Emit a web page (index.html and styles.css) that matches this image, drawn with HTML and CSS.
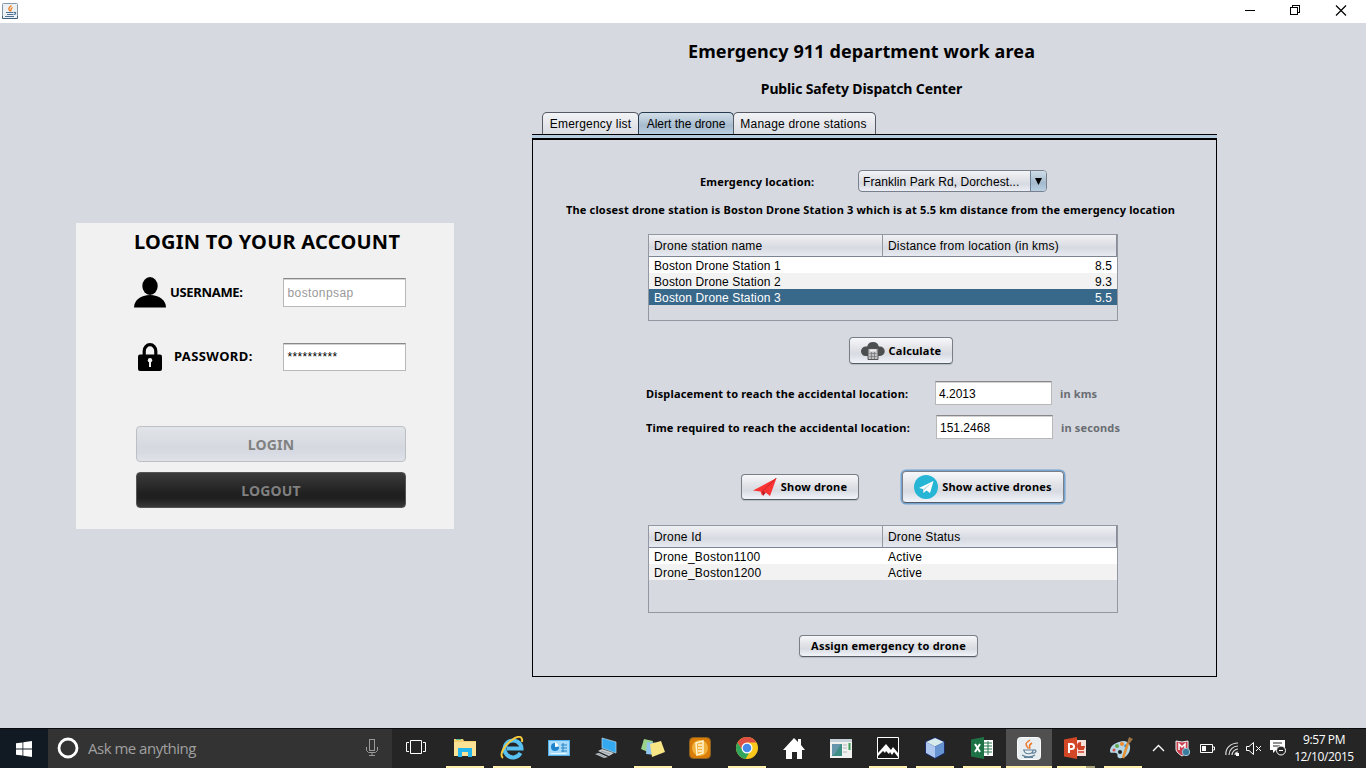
FILE: index.html
```html
<!DOCTYPE html>
<html lang="en">
<head>
<meta charset="utf-8">
<title>Emergency 911 department work area</title>
<link rel="stylesheet" href="styles.css">
</head>
<body>
<header class="titlebar">
  <svg class="java-mini" width="16" height="16" viewBox="0 0 16 16"><rect x=".5" y=".5" width="15" height="15" rx="1" fill="#edf1f4" stroke="#8297a8"/><path d="M.5 13v2.500h15V13" fill="none" stroke="#3f6078"/><path d="M9.500 2.500C6.500 5 6 6 8 8M10.500 4.500C8 6 9.500 7 8.500 8.500" fill="none" stroke="#ee7d1c" stroke-width="1.300"/><path d="M4 9.500h7.500M5 11.500h6M3 13.500h9M12 9.500c2.500-.5 2 2-.5 2" fill="none" stroke="#4d7599" stroke-width="1.200"/></svg>
  <svg class="window-controls" width="112" height="22" viewBox="0 0 112 22" fill="none" stroke="#000" shape-rendering="crispEdges"><path d="M4 10.500h10"/><path d="M49.500 7.500h7v7h-7zM51.500 7V5.500h7v7H57"/><path d="M95 5.500l10 10M105 5.500l-10 10" shape-rendering="auto" stroke-width="1.200"/></svg>
</header>
<main class="workspace">
  <section class="login">
    <h2 class="login-title">LOGIN TO YOUR ACCOUNT</h2>
    <div class="login-row username-row">
      <svg width="32" height="31" viewBox="0 0 32 31"><ellipse cx="16" cy="9" rx="7.700" ry="9"/><path d="M0 30.500C0 23 7 18 16 18s16 5 16 12.500z"/></svg>
      <label class="username-label">USERNAME:</label>
      <div class="field login-field disabled"><span>bostonpsap</span></div>
    </div>
    <div class="login-row password-row">
      <svg width="24" height="28" viewBox="0 0 24 28"><path d="M6.200 13V8a5.800 6.300 0 0 1 11.600 0v5" fill="none" stroke="#000" stroke-width="3.200"/><rect y="11.500" width="24" height="16.500" rx="2"/><circle cx="12" cy="17.300" r="2.200" fill="#f1f1f1"/><path d="M11 18h2v6h-2z" fill="#f1f1f1"/></svg>
      <label class="password-label">PASSWORD:</label>
      <div class="field login-field password-field"><span class="stars">**********</span></div>
    </div>
    <button class="wide-button login-button"><span>LOGIN</span></button>
    <button class="wide-button logout-button"><span>LOGOUT</span></button>
  </section>
  <section class="dispatch">
    <h1 class="heading"><span>Emergency 911 department work area</span></h1>
    <h3 class="subheading"><span>Public Safety Dispatch Center</span></h3>
    <nav class="tabs">
      <div class="tab tab-list">Emergency list</div>
      <div class="tab tab-alert">Alert the drone</div>
      <div class="tab tab-manage">Manage drone stations</div>
    </nav>
    <div class="tab-strip"></div>
    <div class="panel">
      <div class="location-row">
        <label class="location-label">Emergency location:</label>
        <div class="combo"><span class="combo-text">Franklin Park Rd, Dorchest...</span><span class="combo-arrow"><svg width="7" height="7" viewBox="0 0 8 8"><path d="M0 0h8L4 8z"/></svg></span></div>
      </div>
      <p class="message"><span>The closest drone station is Boston Drone Station 3 which is at 5.5 km distance from the emergency location</span></p>
      <div class="table stations">
        <div class="thead"><span>Drone station name</span><span>Distance from location (in kms)</span></div>
        <div class="trow"><span>Boston Drone Station 1</span><span class="num">8.5</span></div>
        <div class="trow alt"><span>Boston Drone Station 2</span><span class="num">9.3</span></div>
        <div class="trow selected"><span>Boston Drone Station 3</span><span class="num">5.5</span></div>
      </div>
      <button class="btn calculate"><svg width="24" height="20" viewBox="0 0 24 20"><path d="M4.500 15A4.600 4.600 0 0 1 5 5.500h1.200a6 6 0 0 1 11.600 0H19a4.700 4.700 0 0 1 0 9.500z" fill="#4b4f50"/><path d="M7 7.500h10v11H7z" fill="#bfc1c3" stroke="#555"/><path d="M9 9.500h6" stroke="#eee" stroke-width="2"/><path d="M8.500 12.500h7M8.500 15.500h7M10.500 11v7M13.500 11v7" stroke="#77797b" stroke-width=".8"/></svg><span>Calculate</span></button>
      <div class="result-row displacement-row"><label>Displacement to reach the accidental location:</label><div class="field result-field">4.2013</div><span class="unit kms">in kms</span></div>
      <div class="result-row time-row"><label>Time required to reach the accidental location:</label><div class="field result-field">151.2468</div><span class="unit secs">in seconds</span></div>
      <div class="drone-buttons">
        <button class="btn show-drone"><svg width="24" height="19" viewBox="0 0 24 19"><path d="M0 12.500L23.500 0 17 18l-5-4-3 3.500-1.500-4z" fill="#fa3434"/><path d="M9 13l1 5 3-3.500z" fill="#bd1d24"/><path d="M23.500 0L9 13.500" stroke="#c9252b"/></svg><span>Show drone</span></button>
        <button class="btn show-active"><svg width="24" height="24" viewBox="0 0 24 24"><circle cx="12" cy="12" r="12" fill="#27b5d5"/><path d="M5 13L19.500 6 16 18l-3.500-2.500L9.500 18l-.5-4z" fill="#fff"/><path d="M18 7.500L9 14l.5 4 1.300-3z" fill="#c7dce4"/></svg><span>Show active drones</span></button>
      </div>
      <div class="table drones">
        <div class="thead"><span>Drone Id</span><span>Drone Status</span></div>
        <div class="trow"><span>Drone_Boston1100</span><span>Active</span></div>
        <div class="trow alt"><span>Drone_Boston1200</span><span>Active</span></div>
      </div>
      <button class="btn assign"><span>Assign emergency to drone</span></button>
    </div>
  </section>
</main>
<footer class="taskbar">
  <div class="start"><svg width="16" height="16" viewBox="0 0 16 16" fill="#fff"><path d="M0 2.300l6.500-.9v6.200H0zM7.300 1.300L16 0v7.600H7.300zM0 8.400h6.500v6.200L0 13.700zM7.300 8.400H16V16l-8.700-1.300z"/></svg></div>
  <div class="search">
    <svg width="22" height="22" viewBox="0 0 22 22"><circle cx="11" cy="11" r="9" fill="none" stroke="#fff" stroke-width="2.800"/></svg>
    <span class="ask">Ask me anything</span>
    <svg class="mic" width="12" height="17" viewBox="0 0 12 17" fill="none" stroke="#999"><rect x="3.500" y=".5" width="5" height="11"/><path d="M.5 8v3.500l2 2h7l2-2V8M6 13.500v3M3 16.500h6"/></svg>
  </div>
  <div class="taskview"><svg width="20" height="15" viewBox="0 0 20 15" fill="none" stroke="#fff"><path d="M4.500.5h11v13h-11zM3 2.500H.5v9H3M17 2.500h2.500v9H17"/></svg></div>
  <div class="apps">
    <div class="app open"><svg width="22" height="20" viewBox="0 0 22 20"><path d="M0 1h9l1 2h12v15H0z" fill="#f2cf70"/><path d="M0 4h22v14H0z" fill="#fbe294"/><path d="M2 1h5v1H2z" fill="#55b98c"/><path d="M4 10h14v9h-4v-5H8v5H4z" fill="#25b6ed"/></svg></div>
    <div class="app open"><svg width="24" height="24" viewBox="0 0 24 24"><path d="M20.500 17a8.500 8.500 0 1 1 1-4.500H7" fill="none" stroke="#58c1f1" stroke-width="4"/><path d="M3 22C-1 19 4 9 12 4 17 0 23-1 22 6" fill="none" stroke="#f5ca3c" stroke-width="2"/></svg></div>
    <div class="app"><svg width="22" height="17" viewBox="0 0 22 17"><rect x=".5" y=".5" width="21" height="15" fill="#a6dafb" stroke="#50aeea"/><circle cx="7" cy="7" r="4" fill="#1c83cc"/><path d="M7 7V2.500a4.500 4.500 0 0 1 4 4z" fill="#fff"/><path d="M13 5h6M13 8h6M13 11h6M15 3v9" stroke="#2b84c2"/><path d="M3 13.500h15" stroke="#e7f7ff"/></svg></div>
    <div class="app"><svg width="24" height="22" viewBox="0 0 24 22"><path d="M8 1l14 4v11L8 11z" fill="#35a9ef" stroke="#b9d6e6" stroke-width=".7"/><path d="M4 14l4-2 12 4-5 3zM1 17l4-1 9 4-4 1z" fill="#c4ccd0"/><path d="M7 14l9 3M4 17l7 3" stroke="#8b969d" stroke-width=".8"/></svg></div>
    <div class="app open"><svg width="24" height="20" viewBox="0 0 24 20"><path d="M3 1l9 2-3 12-9-4z" fill="#9bd38a"/><path d="M6 4l10 1-1 12-10-1z" fill="#8fc5ef"/><path d="M9 6l11-3 4 11-13 5z" fill="#f8e684"/></svg></div>
    <div class="app"><svg width="22" height="22" viewBox="0 0 22 22"><rect x=".5" y=".5" width="21" height="21" rx="4" fill="#d87d08" stroke="#8b5f20"/><circle cx="11" cy="11" r="8" fill="#f2b13a"/><path d="M7 6l7-2v12l-6 2zM9 8h4M9 11h4M9 14h4" fill="none" stroke="#fff5d5" stroke-width="1.500"/></svg></div>
    <div class="app open"><svg width="22" height="22" viewBox="0 0 22 22"><circle cx="11" cy="11" r="11" fill="#fbc91c"/><path d="M1.500 5.500A11 11 0 0 1 20.500 5.500H11L6.700 13.500z" fill="#df4f43"/><path d="M1.500 5.500a11 11 0 0 0 8 16.400l5-8.400H6.700z" fill="#30a55b"/><circle cx="11" cy="11" r="5.500" fill="#fff"/><circle cx="11" cy="11" r="4.300" fill="#4589e9"/></svg></div>
    <div class="app"><svg width="22" height="21" viewBox="0 0 22 21"><path d="M11 0l4 4V1h3v6l4 5h-3v9h-5v-7H9v7H3v-9H0z" fill="#fff"/></svg></div>
    <div class="app"><svg width="22" height="19" viewBox="0 0 22 19"><path d="M0 0h22v19H0z" fill="#f1f2ef"/><path d="M0 0h22v3H0z" fill="#c6d0d7"/><path d="M2 5h10v12H2z" fill="#3d8f86"/><path d="M2 5h9L4 16H2z" fill="#6596ac"/><path d="M13 6h4M13 9h4M13 13h4" stroke="#b0b5bb"/><path d="M19.500 4v7" stroke="#3b9b57" stroke-width="2"/></svg></div>
    <div class="app open"><svg width="22" height="22" viewBox="0 0 22 22"><path d="M.5.5h21v21H.5z" fill="#191919" stroke="#fff"/><path d="M1 16l8-9 5 6 2-3 5 6v4l-4-5-2 3-2-3-1 2-3-3-1 2-2-2-5 5z" fill="#fff"/></svg></div>
    <div class="app open"><svg width="22" height="22" viewBox="0 0 22 22"><path d="M11 0l10 4.500v12L11 22 1 16.500v-12z" fill="#1b2c68"/><path d="M11 1l9 4-9 4.500L2 5z" fill="#d7ebed"/><path d="M2 5l9 4.500V21l-9-5z" fill="#adc7ee"/><path d="M20 5l-9 4.500V21l9-5z" fill="#6693d2"/></svg></div>
    <div class="app open"><svg width="22" height="22" viewBox="0 0 22 22"><path d="M12 3h10v16H12z" fill="#fff"/><path d="M13 6h8M13 9h8M13 12h8M13 15h8M17 4v14" stroke="#24774a"/><path d="M0 2.500L13 0v22L0 19.500z" fill="#1d7345"/><path d="M4 7l5 8M9 7l-5 8" stroke="#fff" stroke-width="2"/></svg></div>
    <div class="app open active"><svg width="24" height="23" viewBox="0 0 24 23"><rect x=".5" y=".5" width="23" height="22" rx="3" fill="#e8edf0" stroke="#f8fafb"/><path d="M13 3C7 7 9 8 11.500 11.500M15 6c-5 3-1 3-2.500 6" fill="none" stroke="#ed792c" stroke-width="1.500"/><path d="M6 13h10c0 5-9 5-9 0M16 13c5-1 3 4-1 3M5 18c4 3 10 2 13 0M7 20.500h9" fill="none" stroke="#5e8099" stroke-width="1.200"/></svg></div>
    <div class="app open powerpoint"><svg width="22" height="22" viewBox="0 0 22 22"><path d="M12 3h10v16H12z" fill="#f8ded8"/><path d="M14 12h6M14 15h6" stroke="#cf4226" stroke-width="1.500"/><path d="M17 5v4h4a4 4 0 1 1-4-4" fill="#cf4226"/><path d="M0 2.500L13 0v22L0 19.500z" fill="#d24726"/><path d="M5 16V7h2.500a2.500 2.500 0 0 1 0 5H5" fill="none" stroke="#fff" stroke-width="2"/></svg></div>
    <div class="app open"><svg width="24" height="23" viewBox="0 0 24 23"><path d="M10 5c8-3 12 2 11 7-1 7-7 10-11 9-3-1 0-4-3-5-3-1-6 1-6-2 0-5 5-8 9-9z" fill="#b4d7e8"/><circle cx="8" cy="9" r="2" fill="#66a94d"/><circle cx="13" cy="7" r="2" fill="#ef8b2c"/><circle cx="5" cy="13" r="1.500" fill="#d94d44"/><circle cx="17" cy="9" r="1.800" fill="#3686c8"/><circle cx="11" cy="15" r="2" fill="#222"/><path d="M14 21l5-15" stroke="#e39233" stroke-width="2.500"/><path d="M18 6l2-6 4 2-4 5z" fill="#9c7445"/></svg></div>
  </div>
  <div class="tray">
    <svg width="112" height="18" viewBox="0 0 112 18" fill="none"><path d="M1 12l5.500-5.500L12 12" stroke="#fff" stroke-width="1.300"/><path d="M24 2l6 1 6-1v8c0 3-4 6-6 7-3-2-6-4-6-7z" fill="#c94051" stroke="#f4f4f4"/><path d="M27 11V5l3 3 3-3v5" stroke="#fff" stroke-width="1.500"/><circle cx="34" cy="13" r="3.700" fill="#397c9d" stroke="#9ec7d6"/><path d="M48.500 5.500h12v8h-12zM61 8h1.500v3H61" stroke="#fff"/><path d="M50 7h4v5h-4z" fill="#fff"/><path d="M74 16C73 9 79 4 86 4M77 16c0-5 4-9 9-9M80 16c0-3 3-6 6-6M83 16c0-2 1-3 3-3" stroke="#ddd" stroke-width="1.200"/><path d="M84 14h3v3h-3z" fill="#fff"/><path d="M94.500 7.500H97L101.500 3.500v12L97 11.500h-2.500z" stroke="#fff"/><path d="M104 7l5 5M109 7l-5 5" stroke="#fff"/></svg>
    <svg class="notifications" width="17" height="17" viewBox="0 0 17 17"><path d="M0 1h15v10H6l-3 3v-3H0z" fill="#fff"/><path d="M3 4h9M3 7h7" stroke="#252525"/><circle cx="11" cy="11.500" r="4.500" fill="#252525" stroke="#fff"/><path d="M9 11.500h4" stroke="#fff"/></svg>
    <div class="clock"><span>9:57 PM</span><span>12/10/2015</span></div>
  </div>
</footer>
</body>
</html>
```
FILE: styles.css
```css
* { box-sizing: border-box; }
body { margin: 0; width: 1366px; height: 768px; overflow: hidden; background: #d6d9e0; color: #000; font: 12px/16px "Liberation Sans", Arial, sans-serif; display: flex; flex-direction: column; }
h1, h2, h3, p { margin: 0; }
svg { display: block; flex: none; }
span, label { white-space: nowrap; }
label, .message, .btn, .unit, .heading, .subheading, .login-title, .wide-button { font-family: "Noto Sans", sans-serif; font-weight: 700; }
.titlebar { height: 23px; background: #fff; display: flex; justify-content: space-between; padding: 3px 13px 0 2px; }
.window-controls { width: 112px; margin-top: -3px; }
.workspace { height: 705px; display: flex; align-items: flex-start; }
.login { margin: 200px 78px 0 76px; width: 378px; height: 306px; background: #f1f1f1; padding: 6px 48px 0 58px; display: flex; flex-direction: column; }
.login-title { font-size: 20px; line-height: 26px; height: 26px; white-space: nowrap; letter-spacing: .25px; }
.login-row { display: flex; align-items: center; height: 31px; }
.username-row { margin-top: 22px; }
.password-row { margin-top: 33px; padding-left: 4px; }
.login-row label { font-size: 13px; line-height: 18px; padding-bottom: 1px; }
.username-label { width: 113px; margin-left: 4px; letter-spacing: -.33px; }
.password-label { width: 109px; margin-left: 12px; letter-spacing: .4px; }
.field { background: #fff; border: 1px solid #b8b8b8; border-top: 1px solid #888; box-shadow: inset 0 1px #d2d2d2; display: flex; align-items: center; padding: 0 3px; }
.login-field { width: 124px; height: 29px; padding-left: 4px; }
.password-field { height: 28px; margin-top: 1px; }
.disabled { color: #999; letter-spacing: .4px; }
.stars { letter-spacing: .33px; }
.wide-button { width: 270px; height: 36px; border-radius: 4px; font-size: 14px; margin-left: 2px; color: #808080; border: 1px solid #bcc0c5; padding: 0; letter-spacing: .15px; }
.login-button { margin-top: 54px; background: linear-gradient(#e1e5e9, #d5d9df 60%, #d7dae3 75%, #dfe3e7); }
.logout-button { margin-top: 10px; background: linear-gradient(#3b3b3b, #202020 60%, #202020 75%, #393939); border-color: #555; }
.dispatch { width: 685px; padding-top: 15px; }
.heading { height: 26px; text-align: center; font-size: 18px; line-height: 26px; width: 659px; letter-spacing: .12px; }
.subheading { height: 20px; width: 659px; margin-top: 15px; text-align: center; font-size: 14px; line-height: 20px; letter-spacing: -.14px; }
.tabs { display: flex; height: 22px; margin: 13px 0 0 10px; }
.tab { border: 1px solid #555a65; border-bottom: 0; border-radius: 5px 5px 0 0; background: linear-gradient(#f2f3f5, #d9dce2); text-align: center; line-height: 22px; white-space: nowrap; }
.tab-list { width: 97px; letter-spacing: .2px; }
.tab-alert { width: 96px; margin-left: -1px; background: linear-gradient(#d3dfe8, #a7bbcf 60%, #b9cee0); border-color: #263a50; }
.tab-manage { width: 143px; margin-left: -1px; padding-right: 2px; letter-spacing: .2px; }
.tab-strip { height: 4px; border-top: 1px solid #000; background: #b4cde0; }
.panel { width: 685px; height: 539px; border: 1px solid #000; border-top-width: 2px; padding: 30px 0 0 115px; display: flex; flex-direction: column; align-items: flex-start; }
.location-row { height: 22px; display: flex; align-items: center; padding-left: 52px; }
.location-label { width: 158px; font-size: 11px; letter-spacing: .15px; padding-top: 1px; }
.combo { width: 189px; height: 22px; border: 1px solid #77808c; border-radius: 4px; background: linear-gradient(#f3f4f6, #d7dae1 65%, #eceef4); display: flex; overflow: hidden; }
.combo-text { flex: 1; padding-left: 4px; line-height: 22px; letter-spacing: .08px; }
.combo-arrow { width: 16px; background: linear-gradient(#cfdde8, #a5bacd 60%, #b9d0e4); border-left: 1px solid #6b8298; display: flex; align-items: center; justify-content: center; }
.message { width: 685px; margin: 10px 0 0 -120px; height: 16px; text-align: center; font-size: 11px; letter-spacing: .17px; }
.table { width: 470px; border: 1px solid #9297a1; display: flex; flex-direction: column; }
.stations { height: 87px; margin-top: 16px; }
.drones { height: 88px; margin-top: 21px; }
.thead { height: 22px; border-bottom: 1px solid #7b8490; border-right: 1px solid #888e98; background: linear-gradient(#f0f1f4, #d7dae1 60%, #e8eaf2); display: grid; grid-template-columns: 233px 1fr; line-height: 22px; }
.thead span { padding-left: 5px; letter-spacing: .2px; }
.thead span + span { border-left: 1px solid #9297a1; }
.trow { height: 16px; display: grid; grid-template-columns: 234px 1fr; background: #fff; line-height: 18px; }
.trow span { padding: 0 5px; letter-spacing: .12px; }
.drones .trow span { letter-spacing: .25px; }
.alt { background: #f2f2f2; }
.selected { background: #39698a; color: #fff; }
.num { text-align: right; }
.btn { display: flex; align-items: center; justify-content: center; gap: 4px; padding: 0; font-size: 11px; line-height: 16px; letter-spacing: .2px; border: 1px solid #7a7e86; border-bottom-color: #555b65; border-radius: 4px; background: linear-gradient(#f7f8fa, #dfe1e6 45%, #d8dbe1 65%, #f2f4fb); box-shadow: 0 1px 1px #b8bcc4; color: #000; }
.calculate { width: 104px; height: 27px; margin: 16px 0 0 201px; }
.result-row { display: flex; align-items: center; height: 24px; font-size: 12px; }
.result-row label { width: 289px; font-size: 11px; letter-spacing: .17px; padding-top: 1px; }
.displacement-row { margin: 17px 0 0 -2px; }
.time-row { margin: 10px 0 0 -2px; }
.result-row.time-row label { width: 290px; }
.result-field { width: 117px; height: 24px; padding-top: 2px; }
.unit { color: #6a6d72; font-size: 11px; margin-left: 8px; letter-spacing: .15px; padding-top: 1px; }
.drone-buttons { margin: 31px 0 0 93px; display: flex; align-items: center; gap: 43px; height: 34px; }
.show-drone { width: 118px; height: 26px; }
.show-active { width: 162px; height: 32px; box-shadow: 0 0 0 1.500px #73a4d1; }
.assign { width: 179px; height: 22px; margin: 22px 0 0 151px; }
.taskbar { height: 40px; background: #252525; border-top: 1px solid #080b0d; display: flex; color: #fff; }
.start { width: 48px; background: #111a22; display: flex; align-items: center; justify-content: center; }
.search { width: 344px; background: #333; display: flex; align-items: center; padding-left: 9px; }
.search > svg, .taskview svg { margin-bottom: 2px; }
.ask { width: 278px; margin-left: 9px; padding-bottom: 2px; color: #a0a0a0; font: 15px/20px "Open Sans", sans-serif; letter-spacing: -.5px; }
.taskview { width: 49px; display: flex; align-items: center; justify-content: center; padding-right: 2px; }
.apps { display: grid; grid-template-columns: repeat(15, 47px); width: 705px; }
.app { display: flex; align-items: center; justify-content: center; position: relative; padding-bottom: 1px; }
.open::after { content: ""; position: absolute; left: 5px; right: 4px; bottom: 0; height: 2px; background: #fff0ad; }
.active { background: linear-gradient(90deg, #252525 1px, #505050 1px); }
.active::after { left: 1px; right: 0; }
.powerpoint::after { background: linear-gradient(90deg, #fff0ad 76%, #aaa278 76%); }
.powerpoint svg { margin-right: 2px; }
.app:last-child svg { margin-right: 4px; }
.tray { display: flex; align-items: center; padding: 0 0 2px 6px; width: 220px; }
.notifications { margin-left: 6px; }
.clock { width: 70px; margin-left: 2px; display: flex; flex-direction: column; text-align: center; font: 12px/17px "Open Sans", sans-serif; letter-spacing: -.4px; }
```
